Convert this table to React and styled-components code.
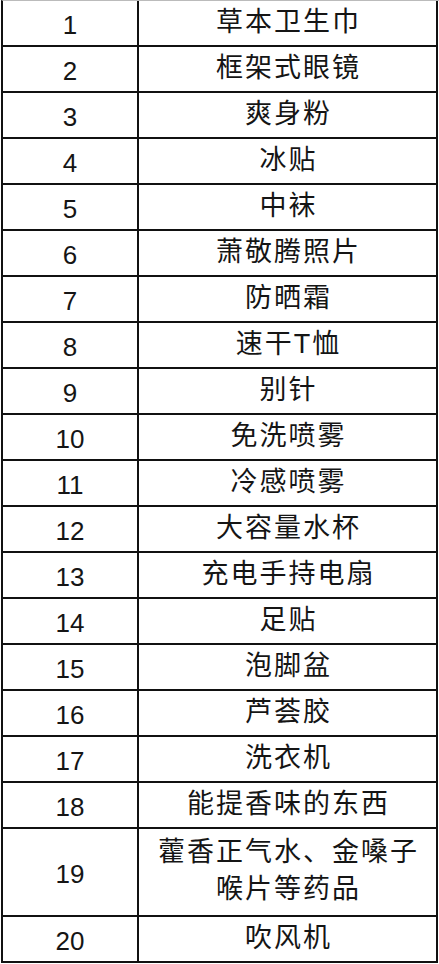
import React from "react";
import styled, { createGlobalStyle } from "styled-components";

const items = [
  "草本卫生巾",
  "框架式眼镜",
  "爽身粉",
  "冰贴",
  "中袜",
  "萧敬腾照片",
  "防晒霜",
  "速干T恤",
  "别针",
  "免洗喷雾",
  "冷感喷雾",
  "大容量水杯",
  "充电手持电扇",
  "足贴",
  "泡脚盆",
  "芦荟胶",
  "洗衣机",
  "能提香味的东西",
  ["藿香正气水、金嗓子", "喉片等药品"],
  "吹风机",
];

const GlobalStyle = createGlobalStyle`
  html, body {
    margin: 0;
    padding: 0;
    background: #fff;
  }
`;

const Table = styled.div`
  display: grid;
  grid-template-columns: 136px 299px;
  width: 437px;
  margin-left: 1px;
  border-left: 2px solid #111;
  border-top: 1px solid #bbb;
  color: #151515;
`;

const Cell = styled.div`
  display: flex;
  flex-direction: column;
  align-items: center;
  justify-content: center;
  height: ${(p) => (p.$tall ? 88 : 46)}px;
  box-sizing: border-box;
  border-right: 2px solid #111;
  border-bottom: 2px solid #111;
`;

const Num = styled(Cell)`
  font-family: "Liberation Sans", Arial, sans-serif;
  font-size: 26px;
  padding-top: 4px;
`;

const Name = styled(Cell)`
  font-family: "Liberation Sans", "Noto Sans CJK SC", sans-serif;
  font-size: 27px;
  letter-spacing: 2px;
  padding-left: 2px;
  padding-bottom: 2px;
  line-height: 37px;
`;

export default function App() {
  return (
    <>
      <GlobalStyle />
      <Table>
        {items.map((item, i) => {
          const tall = Array.isArray(item);
          return (
            <React.Fragment key={i}>
              <Num $tall={tall}>{i + 1}</Num>
              <Name $tall={tall}>
                {tall ? item.map((line) => <span key={line}>{line}</span>) : item}
              </Name>
            </React.Fragment>
          );
        })}
      </Table>
    </>
  );
}
